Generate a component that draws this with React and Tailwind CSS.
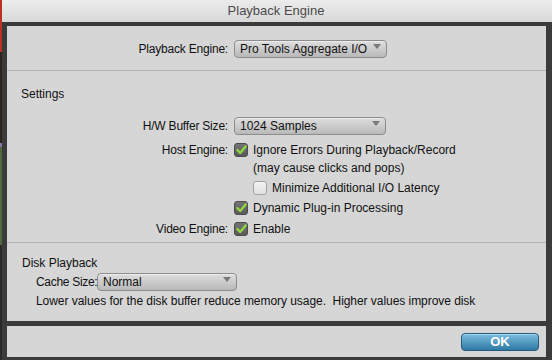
import React from "react";

const Popup = ({ label, width }) => (
  <div
    className={`${width} h-[18px] flex items-center justify-between pl-[5px] pr-[5px] rounded-[4px] border border-[#8c8c8c] bg-gradient-to-b from-[#dedede] to-[#b9b9b9] shadow-[inset_0_1px_0_#ececec]`}
  >
    <span className="text-[12px] text-[#111] leading-none">{label}</span>
    <svg width="8" height="6" viewBox="0 0 8 6" className="mb-[4px]">
      <path d="M0 0 L8 0 L4 5 Z" fill="#7a7a7a" />
    </svg>
  </div>
);

const Check = ({ on }) =>
  on ? (
    <div className="w-[14px] h-[14px] rounded-[3px] border border-[#4a4a4a] bg-gradient-to-b from-[#747474] to-[#5a5a5a] flex items-center justify-center shrink-0">
      <svg width="11" height="10" viewBox="0 0 11 10">
        <path d="M1.5 5.2 L4.2 8 L9.6 1.5" fill="none" stroke="#8fd63f" strokeWidth="2.4" strokeLinecap="round" strokeLinejoin="round" />
      </svg>
    </div>
  ) : (
    <div className="w-[14px] h-[14px] rounded-[3px] border border-[#a2a2a2] bg-gradient-to-b from-[#f2f2f2] to-[#e2e2e2] shrink-0" />
  );

const Row = ({ label, children, className = "" }) => (
  <div className={`flex items-center ${className}`}>
    <div className="w-[222px] pr-[1px] text-right text-[12px] tracking-[-0.2px] text-[#111]">{label}</div>
    <div className="ml-[5px] flex items-center">{children}</div>
  </div>
);

export default function App() {
  return (
    <div
      className="w-[552px] h-[360px] flex overflow-hidden"
      style={{ fontFamily: '"Liberation Sans", Arial, sans-serif' }}
    >
      {/* background app peeking through */}
      <div className="w-[2px] flex flex-col">
        <div className="h-[52px] bg-[#b83228]" />
        <div className="h-[91px] bg-[#2e241c]" />
        <div className="h-[4px] bg-[#8a72a8]" />
        <div className="h-[98px] bg-[#4d6b3c]" />
        <div className="flex-1 bg-[#2a2a2a]" />
      </div>

      <div className="flex-1 flex flex-col">
        {/* title bar */}
        <div className="h-[22px] bg-gradient-to-b from-[#ececec] to-[#d8d8d8] flex items-center justify-center">
          <span className="text-[13px] text-[#4a4a4a] -ml-[2px]">Playback Engine</span>
        </div>

        {/* window body */}
        <div className="flex-1 bg-[#3b3b3b] pt-[4px] pl-[5px] pr-[6px] pb-[3px] flex flex-col gap-[5px]">
          <div className="h-[295px] bg-[#d6d6d6] flex flex-col text-[12px] text-[#111]">
            <Row label="Playback Engine:" className="mt-[14px] h-[18px]">
              <Popup label="Pro Tools Aggregate I/O" width="w-[153px]" />
            </Row>

            <div className="mt-[12px] border-t border-[#b3b3b3]" />

            <div className="mt-[15px] h-[16px] flex items-center pl-[14px]">Settings</div>

            <Row label="H/W Buffer Size:" className="mt-[15px] h-[18px]">
              <Popup label="1024 Samples" width="w-[152px]" />
            </Row>

            <Row label="Host Engine:" className="mt-[7px] h-[16px]">
              <Check on />
              <span className="ml-[5px]">Ignore Errors During Playback/Record</span>
            </Row>
            <div className="mt-[2px] h-[16px] flex items-center pl-[246px]">
              (may cause clicks and pops)
            </div>
            <div className="mt-[4px] h-[16px] flex items-center pl-[246px]">
              <Check />
              <span className="ml-[5px]">Minimize Additional I/O Latency</span>
            </div>
            <Row label="" className="mt-[4px] h-[16px]">
              <Check on />
              <span className="ml-[5px]">Dynamic Plug-in Processing</span>
            </Row>
            <Row label="Video Engine:" className="mt-[5px] h-[16px]">
              <Check on />
              <span className="ml-[5px]">Enable</span>
            </Row>

            <div className="mt-[5px] border-t border-[#b3b3b3]" />

            <div className="mt-[12px] h-[16px] flex items-center pl-[15px]">Disk Playback</div>
            <div className="mt-[2px] h-[18px] flex items-center pl-[29px]">
              <span className="w-[61px] whitespace-nowrap tracking-[-0.3px]">Cache Size:</span>
              <Popup label="Normal" width="w-[140px]" />
            </div>
            <div className="mt-[2px] h-[16px] flex items-center pl-[29px] whitespace-pre tracking-[-0.05px]">
              Lower values for the disk buffer reduce memory usage.  Higher values improve disk
            </div>
          </div>

          <div className="flex-1 bg-[#d6d6d6] flex items-center justify-end pr-[7px]">
            <button className="w-[78px] h-[18px] rounded-[4px] border border-[#245a7c] bg-gradient-to-b from-[#7cbde0] to-[#2d7aa4] text-white text-[13px] font-bold leading-none shadow-[inset_0_1px_0_#a8d6ee]">
              OK
            </button>
          </div>
        </div>
      </div>
    </div>
  );
}
